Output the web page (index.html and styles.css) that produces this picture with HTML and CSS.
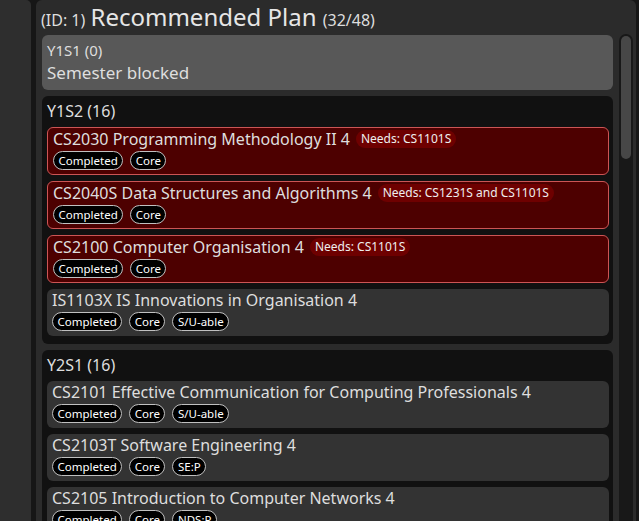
FILE: index.html
```html
<!DOCTYPE html>
<html>
<head>
<meta charset="utf-8">
<link rel="stylesheet" href="styles.css">
</head>
<body>
<div class="side"></div>
<div class="panel">
  <div class="head"><span class="small">(ID: 1)</span> <span class="big">Recommended Plan</span> <span class="small">(32/48)</span></div>
  <div class="body">
    <div class="list">
      <div class="sem blocked">
        <div class="sem-sub">Y1S1 (0)</div>
        <div class="sem-msg">Semester blocked</div>
      </div>
      <div class="sem">
        <div class="sem-title">Y1S2 (16)</div>
        <div class="cards">
          <div class="card red">
            <div class="ctitle">CS2030 Programming Methodology II 4<span class="needs">Needs: CS1101S</span></div>
            <div class="tags"><span class="tag">Completed</span><span class="tag">Core</span></div>
          </div>
          <div class="card red">
            <div class="ctitle">CS2040S Data Structures and Algorithms 4<span class="needs">Needs: CS1231S and CS1101S</span></div>
            <div class="tags"><span class="tag">Completed</span><span class="tag">Core</span></div>
          </div>
          <div class="card red">
            <div class="ctitle">CS2100 Computer Organisation 4<span class="needs">Needs: CS1101S</span></div>
            <div class="tags"><span class="tag">Completed</span><span class="tag">Core</span></div>
          </div>
          <div class="card">
            <div class="ctitle">IS1103X IS Innovations in Organisation 4</div>
            <div class="tags"><span class="tag">Completed</span><span class="tag">Core</span><span class="tag">S/U-able</span></div>
          </div>
        </div>
      </div>
      <div class="sem">
        <div class="sem-title">Y2S1 (16)</div>
        <div class="cards">
          <div class="card">
            <div class="ctitle">CS2101 Effective Communication for Computing Professionals 4</div>
            <div class="tags"><span class="tag">Completed</span><span class="tag">Core</span><span class="tag">S/U-able</span></div>
          </div>
          <div class="card">
            <div class="ctitle">CS2103T Software Engineering 4</div>
            <div class="tags"><span class="tag">Completed</span><span class="tag">Core</span><span class="tag">SE:P</span></div>
          </div>
          <div class="card">
            <div class="ctitle">CS2105 Introduction to Computer Networks 4</div>
            <div class="tags"><span class="tag">Completed</span><span class="tag">Core</span><span class="tag">NDS:P</span></div>
          </div>
        </div>
      </div>
    </div>
    <div class="scrollbar"><div class="grabber"></div></div>
  </div>
</div>
</body>
</html>
```
FILE: styles.css
```css
html, body {
  margin: 0;
  padding: 0;
}
body {
  width: 639px;
  height: 521px;
  overflow: hidden;
  background: #161616;
  display: flex;
  font-family: "Noto Sans", sans-serif;
  color: #dedede;
}
.side {
  width: 31px;
  flex: none;
  background: #2e2e2e;
  border-top-right-radius: 5px;
  margin-right: 5px;
}
.panel {
  flex: 1;
  margin-right: 3px;
  background: #2b2b2b;
  border-radius: 6px 6px 0 0;
  display: flex;
  flex-direction: column;
  min-height: 0;
}
.head {
  padding: 2px 5px 0;
  height: 30px;
  line-height: 30px;
  white-space: nowrap;
  margin-bottom: 3px;
}
.head .small { font-size: 16px; }
.head .big { font-size: 24px; color: #e6e6e6; margin: 0 2px 0 1px; }
.body {
  flex: 1;
  display: flex;
  min-height: 0;
  padding-left: 6px;
  padding-right: 3px;
}
.list {
  flex: 1;
  display: flex;
  flex-direction: column;
  gap: 6px;
}
.sem {
  background: #111111;
  border-radius: 6px;
  padding: 5px 4px 8px 5px;
}
.sem.blocked {
  background: #585858;
  padding: 6px 5px 6px 5px;
}
.sem-sub {
  font-size: 15px;
  line-height: 18px;
  margin-bottom: 3px;
}
.sem-msg {
  font-size: 17px;
  line-height: 22px;
}
.sem-title {
  font-size: 16px;
  line-height: 20px;
  padding-left: 0;
  margin-bottom: 6px;
}
.cards {
  display: flex;
  flex-direction: column;
  gap: 6px;
}
.card {
  background: #333333;
  border-radius: 6px;
  padding: 1px 5px 5px;
}
.card.red {
  background: #4d0000;
  border: 1px solid #cc5555;
  padding-bottom: 4px;
}
.ctitle {
  font-size: 16px;
  line-height: 20px;
  white-space: nowrap;
  display: flex;
  align-items: center;
  margin-bottom: 2px;
}
.needs {
  font-size: 12px;
  line-height: 18px;
  background: #6e0000;
  border-radius: 9px;
  padding: 0 5px;
  margin-left: 6px;
  color: #eeeeee;
}
.tags {
  display: flex;
  gap: 7px;
}
.tag {
  font-size: 11.5px;
  line-height: 17px;
  height: 17px;
  background: #000000;
  color: #ffffff;
  border: 1px solid #c0c0c0;
  border-radius: 10px;
  padding: 0 4.5px;
}
.scrollbar {
  width: 14px;
  flex: none;
  margin-left: 6px;
  margin-top: -1px;
  background: #181818;
  border-radius: 7px 7px 0 0;
  padding: 2px;
  box-sizing: border-box;
}
.grabber {
  height: 123px;
  background: #474747;
  border-radius: 5px;
}
```
